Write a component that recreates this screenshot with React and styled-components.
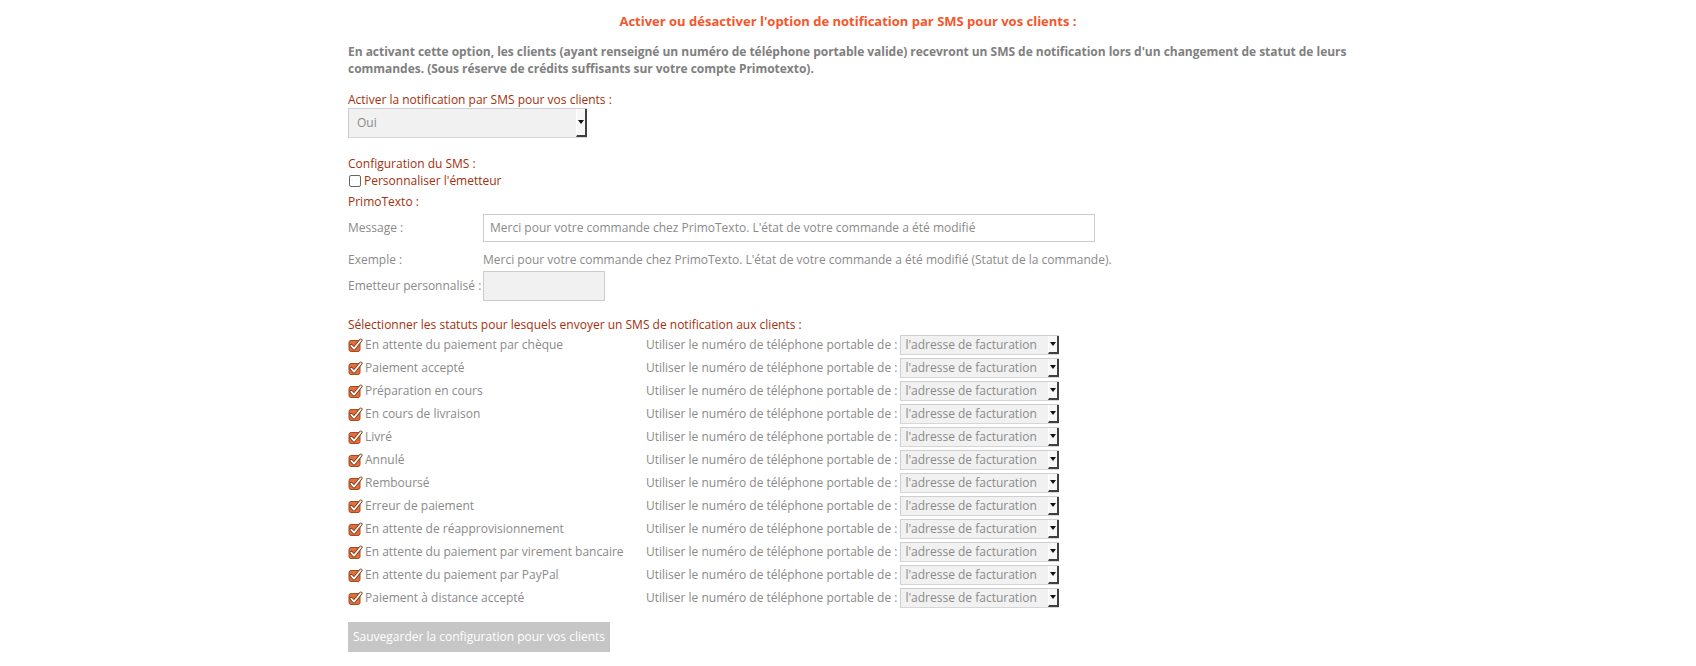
import React from "react";
import styled, { createGlobalStyle } from "styled-components";

const GlobalStyle = createGlobalStyle`
  html, body { margin: 0; padding: 0; background: #fff; }
  body {
    font-family: "Open Sans", "Liberation Sans", sans-serif;
    font-size: 12px;
    color: #888;
  }
`;

const Page = styled.div`
  width: 1000px;
  margin: 0 auto;
  padding-top: 12px;
  padding-bottom: 15px;
  display: flex;
  flex-direction: column;
`;

const Title = styled.h1`
  margin: 0;
  text-align: center;
  font-size: 13px;
  line-height: 18px;
  font-weight: 700;
  color: #f5562b;
`;

const Intro = styled.p`
  margin: 12.5px 0 0;
  font-size: 12px;
  line-height: 17px;
  font-weight: 700;
  letter-spacing: -0.03px;
  color: #808080;
`;

const Label = styled.div`
  margin-top: ${(p) => p.$mt || 0}px;
  font-size: 12px;
  line-height: 17px;
  color: #a4300c;
`;

const SelectBox = styled.div`
  box-sizing: border-box;
  width: ${(p) => p.$w}px;
  height: ${(p) => p.$h}px;
  display: flex;
  align-items: stretch;
  background: #f1f1f1;
  border: 1px solid #cfcfcf;
  border-right: none;
  border-bottom: 1px solid #d6d6d6;
  color: #8a8a8a;
  font-size: 12px;
`;

const SelectText = styled.span`
  flex: 1;
  display: flex;
  align-items: center;
  padding-left: ${(p) => p.$pl}px;
  white-space: nowrap;
  overflow: hidden;
`;

const SelectButton = styled.span`
  box-sizing: border-box;
  width: 11px;
  display: flex;
  align-items: center;
  justify-content: center;
  background: #f7f7f7;
  border-left: 1px solid #ffffff;
  border-right: 2px solid #404040;
  border-bottom: 2px solid #404040;
  &::after {
    content: "";
    border-left: 3px solid transparent;
    border-right: 3px solid transparent;
    border-top: 4px solid #111;
  }
`;

const CheckRow = styled.label`
  height: 18px;
  display: flex;
  align-items: center;
  gap: 3px;
  color: #a4300c;
  font-size: 12px;
  line-height: 17px;
`;

const PlainBox = styled.span`
  box-sizing: border-box;
  margin-left: 1px;
  width: 12px;
  height: 12px;
  border: 1px solid #666;
  border-radius: 2px;
  background: #fff;
`;

const FormRow = styled.div`
  display: grid;
  grid-template-columns: 135px auto;
  justify-content: start;
  align-items: center;
  margin-top: ${(p) => p.$mt || 0}px;
  line-height: 17px;
  color: #8a8a8a;
`;

const TextInput = styled.div`
  box-sizing: border-box;
  width: ${(p) => p.$w}px;
  height: ${(p) => p.$h}px;
  border: 1px solid #cccccc;
  background: ${(p) => (p.$disabled ? "#f1f1f1" : "#fff")};
  padding: 0 6px;
  display: flex;
  align-items: center;
  color: #8a8a8a;
  white-space: nowrap;
`;

const StatusList = styled.div`
  display: flex;
  flex-direction: column;
`;

const StatusRow = styled.div`
  height: 23px;
  display: grid;
  grid-template-columns: 298px max-content 159px;
  justify-content: start;
  align-items: center;
  color: #8a8a8a;
`;

const StatusName = styled.span`
  display: flex;
  align-items: center;
  gap: 2px;
`;

const PhoneLabel = styled.span`
  padding-right: 3px;
  white-space: nowrap;
`;

const SaveButton = styled.button`
  margin-top: 12.5px;
  align-self: flex-start;
  width: 262px;
  height: 30px;
  border: none;
  background: #c6c6c6;
  color: #fff;
  font-family: "Open Sans", "Liberation Sans", sans-serif;
  font-size: 12px;
  padding: 0;
`;

const CheckedIcon = () => (
  <svg width="15" height="14" viewBox="0 0 15 14" style={{ flex: "none" }}>
    <rect x="1" y="2.5" width="11" height="11" rx="2" fill="#e2703c" stroke="#a9491f" />
    <path d="M3.3 7.6 L6 10.6 L12.8 2.2" fill="none" stroke="#7a3414" strokeWidth="3.4" strokeLinecap="round" strokeLinejoin="round" />
    <path d="M3.3 7.6 L6 10.6 L12.8 2.2" fill="none" stroke="#ffffff" strokeWidth="1.7" strokeLinecap="round" strokeLinejoin="round" />
  </svg>
);

const statuses = [
  "En attente du paiement par chèque",
  "Paiement accepté",
  "Préparation en cours",
  "En cours de livraison",
  "Livré",
  "Annulé",
  "Remboursé",
  "Erreur de paiement",
  "En attente de réapprovisionnement",
  "En attente du paiement par virement bancaire",
  "En attente du paiement par PayPal",
  "Paiement à distance accepté",
];

export default function App() {
  return (
    <>
      <GlobalStyle />
      <Page>
        <Title>Activer ou désactiver l'option de notification par SMS pour vos clients :</Title>
        <Intro>
          En activant cette option, les clients (ayant renseigné un numéro de téléphone portable valide) recevront un SMS de notification lors d'un changement de statut de leurs commandes. (Sous réserve de crédits suffisants sur votre compte Primotexto).
        </Intro>

        <Label $mt={14}>Activer la notification par SMS pour vos clients :</Label>
        <SelectBox $w={239} $h={30}>
          <SelectText $pl={8}>Oui</SelectText>
          <SelectButton />
        </SelectBox>

        <Label $mt={17}>Configuration du SMS :</Label>
        <CheckRow>
          <PlainBox />
          Personnaliser l'émetteur
        </CheckRow>
        <Label $mt={3.5}>PrimoTexto :</Label>

        <FormRow $mt={3.5}>
          <span>Message :</span>
          <TextInput $w={612} $h={28}>
            Merci pour votre commande chez PrimoTexto. L'état de votre commande a été modifié
          </TextInput>
        </FormRow>
        <FormRow $mt={9.5}>
          <span>Exemple :</span>
          <span>Merci pour votre commande chez PrimoTexto. L'état de votre commande a été modifié (Statut de la commande).</span>
        </FormRow>
        <FormRow $mt={2.5}>
          <span>Emetteur personnalisé :</span>
          <TextInput $w={122} $h={30} $disabled />
        </FormRow>

        <Label $mt={15.5}>Sélectionner les statuts pour lesquels envoyer un SMS de notification aux clients :</Label>
        <StatusList>
          {statuses.map((s) => (
            <StatusRow key={s}>
              <StatusName>
                <CheckedIcon />
                {s}
              </StatusName>
              <PhoneLabel>Utiliser le numéro de téléphone portable de :</PhoneLabel>
              <SelectBox $w={159} $h={20}>
                <SelectText $pl={4}>l'adresse de facturation</SelectText>
                <SelectButton />
              </SelectBox>
            </StatusRow>
          ))}
        </StatusList>

        <SaveButton>Sauvegarder la configuration pour vos clients</SaveButton>
      </Page>
    </>
  );
}
